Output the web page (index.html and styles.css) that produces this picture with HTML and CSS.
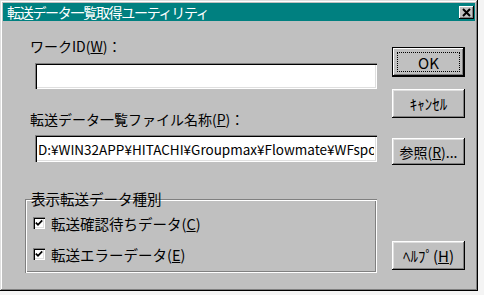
FILE: index.html
```html
<!DOCTYPE html>
<html lang="ja">
<head>
  <meta charset="UTF-8" />
  <title>転送データ一覧取得ユーティリティ</title>
  <link rel="stylesheet" href="styles.css">
</head>
<body>
  <div class="window">
    <div class="titlebar">
      <span class="title">転送データ一覧取得ユーティリティ</span>
      <span class="close-btn">
        <svg width="15" height="13" viewBox="0 0 15 13">
          <path d="M4 3 L11 10 M11 3 L4 10" stroke="#000" stroke-width="2" fill="none"/>
        </svg>
      </span>
    </div>

    <div class="content">
      <div class="form-col">
        <label class="field-label" for="workId">ワークID(<u>W</u>)：</label>
        <input class="field" type="text" id="workId" />

        <label class="field-label label-path" for="listFile">転送データ一覧ファイル名称(<u>P</u>)：</label>
        <input class="field field-path" type="text" id="listFile" value="D:¥WIN32APP¥HITACHI¥Groupmax¥Flowmate¥WFspool¥list.dat" />

        <fieldset class="group">
          <legend>表示転送データ種別</legend>
          <div class="check-row">
            <span class="check">
              <svg width="8" height="8" viewBox="0 0 8 8"><path d="M0.8 3.6 L3 5.8 L7.2 1.4" stroke="#000" stroke-width="1.8" fill="none"/></svg>
            </span>
            <span>転送確認待ちデータ(<u>C</u>)</span>
          </div>
          <div class="check-row">
            <span class="check">
              <svg width="8" height="8" viewBox="0 0 8 8"><path d="M0.8 3.6 L3 5.8 L7.2 1.4" stroke="#000" stroke-width="1.8" fill="none"/></svg>
            </span>
            <span>転送エラーデータ(<u>E</u>)</span>
          </div>
        </fieldset>
      </div>

      <div class="button-col">
        <button class="btn btn-ok">OK</button>
        <button class="btn btn-cancel">ｷｬﾝｾﾙ</button>
        <button class="btn btn-browse">参照(<u>R</u>)...</button>
        <button class="btn btn-help">ﾍﾙﾌﾟ(<u>H</u>)</button>
      </div>
    </div>
  </div>
</body>
</html>
```

FILE: styles.css
```css
* {
  margin: 0;
  padding: 0;
  box-sizing: border-box;
}

body {
  background-color: #f4f4f4;
  font-family: "Noto Sans CJK JP", "Noto Sans", sans-serif;
  font-size: 14px;
  color: #000;
}

.window {
  width: 478px;
  height: 291px;
  padding: 3px;
  background-color: #c0c0c0;
  box-shadow: inset -1px -1px #000, inset 1px 1px #dfdfdf,
              inset -2px -2px #808080, inset 2px 2px #fff;
}

/* Title bar */
.titlebar {
  height: 18px;
  background-color: #008080;
  display: flex;
  justify-content: space-between;
  align-items: center;
  padding: 0 1px 0 4px;
}

.title {
  color: #fff;
  font-size: 14px;
  letter-spacing: -1.3px;
  line-height: 18px;
}

.close-btn {
  width: 15px;
  height: 13px;
  display: flex;
  background-color: #c0c0c0;
  box-shadow: inset -1px -1px #000, inset 1px 1px #fff, inset -2px -2px #808080;
}

/* Body */
.content {
  display: flex;
  padding-left: 22px;
}

.form-col {
  width: 352px;
  display: flex;
  flex-direction: column;
}

.field-label {
  display: block;
  line-height: 18px;
  margin: 16px 0 0 5px;
}

.label-path {
  margin-top: 21px;
}

.field {
  display: block;
  width: 342px;
  height: 26px;
  margin: 8px 0 0 10px;
  padding: 0 3px;
  border: none;
  outline: none;
  background-color: #fff;
  font: inherit;
  font-size: 13.5px;
  color: #000;
  box-shadow: inset 1px 1px #808080, inset 2px 2px #000,
              inset -1px -1px #fff, inset -2px -2px #dfdfdf;
}

.field-path {
  margin-top: 7px;
  height: 27px;
}

/* Group box */
.group {
  margin-top: 28px;
  height: 83px;
  padding: 0 0 0 4px;
  border: none;
  box-shadow: inset 1px 1px #808080, inset -1px -1px #fff,
              inset 2px 2px #fff, inset -2px -2px #808080;
}

.group legend {
  padding: 0 2px;
  line-height: 18px;
  font-size: 14.5px;
}

.check-row {
  display: flex;
  align-items: center;
  gap: 6px;
  height: 20px;
  margin: 5px 0 0 4px;
  font-size: 14.5px;
}

.check-row + .check-row {
  margin-top: 11px;
}

.check {
  width: 12px;
  height: 12px;
  display: flex;
  align-items: center;
  justify-content: center;
  background-color: #fff;
  box-shadow: inset 1px 1px #808080, inset 2px 2px #000,
              inset -1px -1px #fff, inset -2px -2px #dfdfdf;
}

/* Buttons */
.button-col {
  width: 73px;
  margin-left: 15px;
  display: flex;
  flex-direction: column;
}

.btn {
  width: 73px;
  height: 29px;
  border: none;
  background-color: #c0c0c0;
  font: inherit;
  font-size: 14px;
  color: #000;
  box-shadow: inset -1px -1px #000, inset 1px 1px #fff,
              inset -2px -2px #808080, inset 2px 2px #dfdfdf;
}

.btn-ok {
  margin-top: 26px;
  height: 30px;
  font-size: 15px;
  box-shadow: inset 0 0 0 1px #000, inset -2px -2px #000, inset 2px 2px #fff,
              inset -3px -3px #808080;
  outline: 1px dotted #000;
  outline-offset: -6px;
}

.btn-cancel {
  margin-top: 12px;
  font-size: 15px;
}

.btn-browse {
  margin-top: 20px;
  height: 27px;
}

.btn-help {
  margin-top: 76px;
  font-size: 15px;
}
```
